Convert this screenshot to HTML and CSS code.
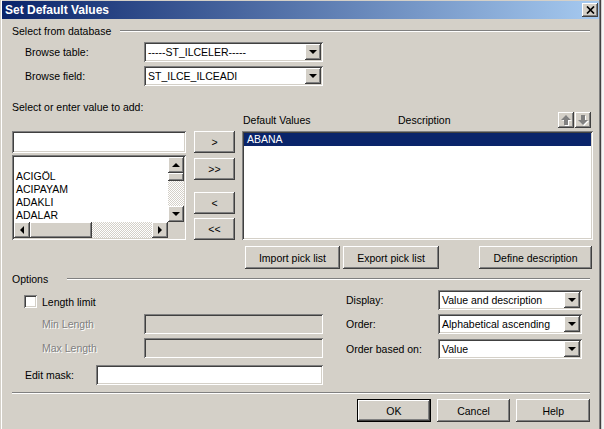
FILE: index.html
```html
<!DOCTYPE html>
<html>
<head>
<meta charset="utf-8">
<title>Set Default Values</title>
<link rel="stylesheet" href="styles.css">
</head>
<body>
<div class="desk">
  <div class="window">
    <div class="titlebar">
      <span class="title">Set Default Values</span>
      <div class="close-btn raised">
        <svg width="9" height="8" viewBox="0 0 9 8"><path d="M1,0.5 L8,7.5 M8,0.5 L1,7.5" stroke="#000" stroke-width="1.7" fill="none"/></svg>
      </div>
    </div>
    <div class="content">
      <div class="group-head"><span class="gh-text gh-db">Select from database</span><div class="etch-line"></div></div>

      <div class="field-row first-field">
        <span class="flabel">Browse table:</span>
        <div class="select sunken sel-browse"><span class="sel-text">-----ST_ILCELER-----</span><div class="drop raised"><i class="tri-down"></i></div></div>
      </div>
      <div class="field-row">
        <span class="flabel">Browse field:</span>
        <div class="select sunken sel-browse"><span class="sel-text">ST_ILCE_ILCEADI</span><div class="drop raised"><i class="tri-down"></i></div></div>
      </div>

      <div class="mid">
        <div class="leftpart">
          <div class="lp-label">Select or enter value to add:</div>
          <div class="pick">
            <div class="leftcol">
              <div class="textbox sunken"></div>
              <div class="listbox sunken">
                <div class="items">
                  <div class="item">&nbsp;</div>
                  <div class="item">ACIGÖL</div>
                  <div class="item">ACIPAYAM</div>
                  <div class="item">ADAKLI</div>
                  <div class="item">ADALAR</div>
                </div>
                <div class="vscroll">
                  <div class="sbtn raised"><i class="tri-up"></i></div>
                  <div class="vthumb raised"></div>
                  <div class="track"></div>
                  <div class="sbtn raised"><i class="tri-down"></i></div>
                </div>
                <div class="hscroll">
                  <div class="sbtn raised"><i class="tri-left"></i></div>
                  <div class="hthumb raised"></div>
                  <div class="track"></div>
                  <div class="sbtn raised"><i class="tri-right"></i></div>
                </div>
                <div class="corner"></div>
              </div>
            </div>
            <div class="movecol">
              <div class="btn raised mv">&gt;</div>
              <div class="btn raised mv mv2">&gt;&gt;</div>
              <div class="btn raised mv mv3">&lt;</div>
              <div class="btn raised mv mv4">&lt;&lt;</div>
            </div>
          </div>
        </div>

        <div class="rightpart">
          <div class="rp-head">
            <span class="dv">Default Values</span>
            <span class="desc">Description</span>
            <div class="arrow-btn raised">
              <svg width="16" height="16" viewBox="0 0 16 16"><polygon points="9,4 14,9 11,9 11,14 7,14 7,9 4,9" fill="#fff"/><polygon points="8,3 13,8 10,8 10,13 6,13 6,8 3,8" fill="#808080"/></svg>
            </div>
            <div class="arrow-btn raised ab2">
              <svg width="16" height="16" viewBox="0 0 16 16"><polygon points="9,14 14,9 11,9 11,4 7,4 7,9 4,9" fill="#fff"/><polygon points="8,13 13,8 10,8 10,3 6,3 6,8 3,8" fill="#808080"/></svg>
            </div>
          </div>
          <div class="vlist sunken">
            <div class="sel-row">ABANA</div>
          </div>
          <div class="btnrow">
            <div class="btn raised b-import">Import pick list</div>
            <div class="btn raised b-export">Export pick list</div>
            <div class="btn raised b-define">Define description</div>
          </div>
        </div>
      </div>

      <div class="group-head opt-head"><span class="gh-text gh-opt">Options</span><div class="etch-line"></div></div>

      <div class="opts">
        <div class="opt-left">
          <div class="chk-row">
            <div class="checkbox sunken"></div>
            <span class="chk-label">Length limit</span>
          </div>
          <div class="len-row">
            <span class="dlabel">Min Length</span>
            <div class="dinput sunken"></div>
          </div>
          <div class="len-row len2">
            <span class="dlabel">Max Length</span>
            <div class="dinput sunken"></div>
          </div>
          <div class="mask-row">
            <span class="mlabel">Edit mask:</span>
            <div class="minput sunken"></div>
          </div>
        </div>
        <div class="opt-right">
          <div class="or-row">
            <span class="olabel">Display:</span>
            <div class="select sunken sel-opt"><span class="sel-text">Value and description</span><div class="drop raised"><i class="tri-down"></i></div></div>
          </div>
          <div class="or-row or2">
            <span class="olabel">Order:</span>
            <div class="select sunken sel-opt"><span class="sel-text">Alphabetical ascending</span><div class="drop raised"><i class="tri-down"></i></div></div>
          </div>
          <div class="or-row or3">
            <span class="olabel">Order based on:</span>
            <div class="select sunken sel-opt"><span class="sel-text">Value</span><div class="drop raised"><i class="tri-down"></i></div></div>
          </div>
        </div>
      </div>

      <div class="etch-line bottom-sep"></div>

      <div class="footer">
        <div class="btn default-btn">OK</div>
        <div class="btn raised fbtn">Cancel</div>
        <div class="btn raised fbtn">Help</div>
      </div>
    </div>
  </div>
  <div class="edge"></div>
</div>
</body>
</html>
```

FILE: styles.css
```css
* { box-sizing: border-box; }
html, body { margin: 0; padding: 0; }
body {
  width: 604px;
  height: 429px;
  overflow: hidden;
  background: #f2f2f2;
  font-family: "Liberation Sans", Arial, sans-serif;
  font-size: 10.5px;
  color: #000;
}
.desk { display: flex; height: 429px; }
.window {
  width: 601px;
  height: 429px;
  flex-shrink: 0;
  background: #d4d0c8;
  box-shadow: inset 1px 0 #d4d0c8, inset 2px 0 #fff, inset -1px 0 #404040, inset -2px 0 #808080;
  display: flex;
  flex-direction: column;
}
.edge { flex: 1; background: #f4f4f4; border-left: 1px solid #d0d0d0; }

.raised {
  background: #d4d0c8;
  box-shadow: inset -1px -1px #404040, inset 1px 1px #fff, inset -2px -2px #808080, inset 2px 2px #d4d0c8;
}
.sunken {
  box-shadow: inset 1px 1px #808080, inset -1px -1px #fff, inset 2px 2px #404040, inset -2px -2px #d4d0c8;
}

/* title bar */
.titlebar {
  height: 18px;
  margin: 1px 2px 0 2px;
  background: linear-gradient(to right, #0a246a, #a6caf0);
  display: flex;
  align-items: center;
  padding: 0 1px 0 3px;
}
.title { flex: 1; color: #fff; font-weight: bold; font-size: 12px; }
.close-btn {
  width: 16px;
  height: 14px;
  display: flex;
  align-items: center;
  justify-content: center;
}
.close-btn svg { display: block; margin-top: 0; }

/* content */
.content {
  padding: 0 11px 0 12px;
  display: flex;
  flex-direction: column;
}
.group-head {
  display: flex;
  align-items: center;
  height: 14px;
  margin-top: 5px;
}
.gh-text { flex-shrink: 0; white-space: nowrap; }
.gh-db { width: 108px; }
.gh-opt { width: 55px; }
.etch-line {
  flex: 1;
  height: 2px;
  border-top: 1px solid #808080;
  border-bottom: 1px solid #fff;
}

.field-row {
  display: flex;
  align-items: center;
  height: 20px;
  margin-top: 4px;
  padding-left: 13px;
}
.first-field { margin-top: 4px; }
.flabel { width: 119px; }

.select {
  display: flex;
  height: 20px;
  background: #fff;
  padding: 2px;
}
.sel-browse { width: 179px; }
.sel-opt { width: 144px; }
.sel-text { flex: 1; padding-left: 2px; line-height: 16px; white-space: nowrap; overflow: hidden; }
.drop {
  width: 16px;
  display: flex;
  align-items: center;
  justify-content: center;
}

.tri-down, .tri-up, .tri-left, .tri-right { display: block; width: 0; height: 0; }
.tri-down { border-left: 4px solid transparent; border-right: 4px solid transparent; border-top: 4px solid #000; }
.tri-up { border-left: 4px solid transparent; border-right: 4px solid transparent; border-bottom: 4px solid #000; }
.tri-left { border-top: 4px solid transparent; border-bottom: 4px solid transparent; border-right: 4px solid #000; }
.tri-right { border-top: 4px solid transparent; border-bottom: 4px solid transparent; border-left: 4px solid #000; }

/* middle block */
.mid {
  display: flex;
  margin-top: 14px;
  height: 169px;
}
.leftpart { width: 223px; flex-shrink: 0; display: flex; flex-direction: column; }
.lp-label { height: 14px; line-height: 14px; }
.pick { display: flex; margin-top: 17px; }
.leftcol { width: 175px; display: flex; flex-direction: column; }
.textbox { height: 22px; background: #fff; }
.listbox {
  height: 85px;
  margin-top: 2px;
  padding: 2px;
  background: #fff;
  display: grid;
  grid-template-columns: 1fr 16px;
  grid-template-rows: 1fr 16px;
}
.items { padding-left: 2px; overflow: hidden; }
.item { height: 13px; line-height: 13px; white-space: nowrap; }
.vscroll { display: flex; flex-direction: column; }
.hscroll { display: flex; }
.sbtn { width: 16px; height: 16px; display: flex; align-items: center; justify-content: center; flex-shrink: 0; }
.vthumb { height: 8px; }
.hthumb { width: 62px; }
.track {
  flex: 1;
  background-color: #fff;
  background-image: repeating-conic-gradient(#d4d0c8 0 25%, #fff 0 50%);
  background-size: 2px 2px;
}
.corner { background: #d4d0c8; }

.movecol { display: flex; flex-direction: column; margin-left: 8px; }
.btn {
  display: flex;
  align-items: center;
  justify-content: center;
  white-space: nowrap;
}
.mv { width: 41px; height: 22px; }
.mv2 { margin-top: 5px; }
.mv3 { margin-top: 12px; }
.mv4 { margin-top: 4px; }

.rightpart { width: 351px; flex-shrink: 0; margin-left: 7px; margin-top: 12px; display: flex; flex-direction: column; }
.rp-head { display: flex; align-items: center; height: 16px; }
.dv { width: 156px; padding-left: 1px; }
.desc { width: 160px; }
.arrow-btn { width: 16px; height: 16px; }
.arrow-btn svg { display: block; }
.ab2 { margin-left: 1px; }
.vlist { height: 109px; margin-top: 3px; padding: 2px; background: #fff; }
.sel-row { height: 13px; line-height: 13px; background: #0a246a; color: #fff; padding-left: 3px; }
.btnrow { display: flex; margin-top: 6px; height: 23px; }
.b-import { width: 95px; margin-left: 3px; }
.b-export { width: 96px; margin-left: 3px; }
.b-define { width: 113px; margin-left: 40px; }

/* options */
.opt-head { margin-top: 3px; }
.opts { display: flex; margin-top: 4px; }
.opt-left { width: 311px; flex-shrink: 0; display: flex; flex-direction: column; }
.chk-row { display: flex; align-items: center; height: 13px; margin-top: 5px; padding-left: 12px; }
.checkbox { width: 13px; height: 13px; background: #fff; flex-shrink: 0; }
.chk-label { margin-left: 5px; }
.len-row { display: flex; align-items: center; height: 20px; margin-top: 6px; padding-left: 30px; }
.len2 { margin-top: 4px; }
.dlabel { width: 102px; color: #808080; text-shadow: 1px 1px 0 #fff; }
.dinput { width: 180px; height: 20px; background: #d4d0c8; }
.mask-row { display: flex; align-items: center; height: 20px; margin-top: 7px; padding-left: 13px; }
.mlabel { width: 71px; }
.minput { width: 228px; height: 20px; background: #fff; }

.opt-right { margin-left: 23px; display: flex; flex-direction: column; }
.or-row { display: flex; align-items: center; height: 20px; }
.or2 { margin-top: 4px; }
.or3 { margin-top: 5px; }
.olabel { width: 92px; }

.bottom-sep { flex: none; margin-top: 7px; }

.footer { display: flex; margin-top: 5px; padding-left: 345px; }
.fbtn { width: 75px; height: 23px; margin-left: 6px; }
.default-btn {
  width: 75px;
  height: 23px;
  background: #d4d0c8;
  box-shadow: inset 0 0 0 1px #000, inset -2px -2px #404040, inset 2px 2px #fff, inset -3px -3px #808080;
}
```
